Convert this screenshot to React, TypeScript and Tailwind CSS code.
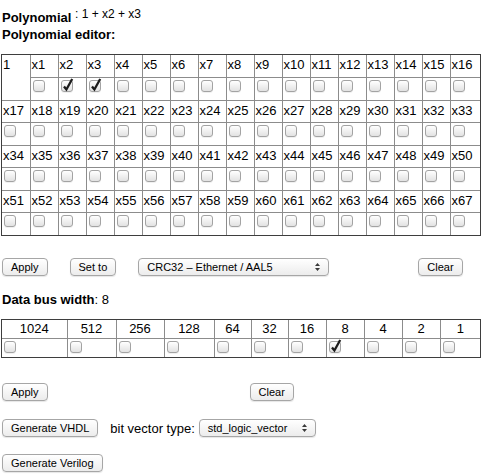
import React from 'react';

const CHECKED_POLY = ['x2', 'x3'];
const BUS_WIDTHS = [1024, 512, 256, 128, 64, 32, 16, 8, 4, 2, 1];
const BUS_COLS = ['w-[65px]', 'w-[49px]', 'w-[48px]', 'w-[50px]', 'w-[37px]', 'w-[37px]', 'w-[38px]', 'w-[38px]', 'w-[38px]', 'w-[38px]', ''];

// grupos de 17 coeficientes, o primeiro começa com o termo "1"
const groups = [
  Array.from({ length: 16 }, (_, i) => `x${i + 1}`),
  Array.from({ length: 17 }, (_, i) => `x${i + 17}`),
  Array.from({ length: 17 }, (_, i) => `x${i + 34}`),
  Array.from({ length: 17 }, (_, i) => `x${i + 51}`),
];

function Checkbox({ checked = false }: { checked?: boolean }) {
  return (
    <span className="relative inline-block w-[12px] h-[12px] rounded-[3px] border border-[#a3a3a3] bg-linear-to-b from-white to-[#e2e2e2] shadow-[0_1px_0_rgba(0,0,0,0.06)] align-top">
      {checked && (
        <svg width="14" height="16" viewBox="0 0 14 16" className="absolute -left-[1px] -top-[4px]">
          <path d="M3 9.5 L5.4 12.5 L11.2 2" stroke="#1c1c1c" strokeWidth="2.3" fill="none" />
        </svg>
      )}
    </span>
  );
}

function Button({ children, className = '' }: { children: React.ReactNode; className?: string }) {
  return (
    <button
      type="button"
      className={`h-[18px] px-[8px] rounded-[4px] border border-[#a6a6a6] bg-linear-to-b from-white to-[#ececec] text-[11px] leading-none text-black shadow-[0_1px_1px_rgba(0,0,0,0.1)] ${className}`}
    >
      {children}
    </button>
  );
}

function Select({ value, className = '' }: { value: string; className?: string }) {
  return (
    <div
      className={`flex items-center h-[18px] pl-[8px] pr-[8px] rounded-[4px] border border-[#a6a6a6] bg-linear-to-b from-white to-[#ececec] text-[11px] leading-none shadow-[0_1px_1px_rgba(0,0,0,0.1)] ${className}`}
    >
      <span className="flex-1">{value}</span>
      <svg width="5" height="8" viewBox="0 0 5 8">
        <path d="M0 3 L2.5 0 L5 3 Z M0 5 L2.5 8 L5 5 Z" fill="#3a3a3a" />
      </svg>
    </div>
  );
}

export default function App() {
  return (
    <div className="font-['Liberation_Sans',Arial,sans-serif] text-[13px] leading-[15px] text-black bg-white w-[485px] h-[476px] pt-[10px] overflow-hidden">
      <div className="pl-[2px] h-[17px]">
        <b>Polynomial</b> <span className="relative -top-[4px] text-[12px]">: 1 + x2 + x3</span>
      </div>
      <div className="pl-[2px] h-[15px] font-bold">Polynomial editor:</div>

      {/* editor do polinômio */}
      <div className="mt-[12px] ml-[1px] w-[480px] border border-[#3e3e3e]">
        <table className="w-full table-fixed border-collapse border-hidden">
          <colgroup>
            {Array.from({ length: 17 }, (_, i) => (
              <col key={i} className={i < 16 ? 'w-[28px]' : ''} />
            ))}
          </colgroup>
          <tbody>
            {groups.map((labels, g) => (
              <React.Fragment key={g}>
                <tr>
                  {g === 0 && (
                    <td rowSpan={2} className="border border-[#8c8c8c] align-top h-[22px] pl-[1px] pt-[2px]">
                      1
                    </td>
                  )}
                  {labels.map((l) => (
                    <td key={l} className="border border-[#8c8c8c] align-top h-[22px] pl-[1px] pt-[2px]">
                      {l}
                    </td>
                  ))}
                </tr>
                <tr>
                  {labels.map((l) => (
                    <td key={l} className="border border-[#8c8c8c] align-top h-[23px] pl-[2px] pt-[2px]">
                      <Checkbox checked={CHECKED_POLY.includes(l)} />
                    </td>
                  ))}
                </tr>
              </React.Fragment>
            ))}
          </tbody>
        </table>
      </div>

      <div className="flex items-center mt-[22px] pl-[2px]">
        <Button>Apply</Button>
        <Button className="ml-[22px]">Set to</Button>
        <Select value="CRC32 – Ethernet / AAL5" className="ml-[22px] w-[191px]" />
        <Button className="ml-[89px]">Clear</Button>
      </div>

      <div className="mt-[16px] pl-[2px] h-[15px]">
        <b>Data bus width</b>: 8
      </div>

      {/* largura do barramento */}
      <div className="mt-[12px] ml-[1px] w-[480px] border border-[#3e3e3e]">
        <table className="w-full table-fixed border-collapse border-hidden">
          <colgroup>
            {BUS_COLS.map((c, i) => (
              <col key={i} className={c} />
            ))}
          </colgroup>
          <tbody>
            <tr>
              {BUS_WIDTHS.map((w) => (
                <td key={w} className="border border-[#8c8c8c] text-center h-[18px] p-0">
                  {w}
                </td>
              ))}
            </tr>
            <tr>
              {BUS_WIDTHS.map((w) => (
                <td key={w} className="border border-[#8c8c8c] align-top h-[19px] pl-[2px] pt-[2px]">
                  <Checkbox checked={w === 8} />
                </td>
              ))}
            </tr>
          </tbody>
        </table>
      </div>

      <div className="flex items-center mt-[25px] pl-[2px]">
        <Button>Apply</Button>
        <Button className="ml-[202px]">Clear</Button>
      </div>

      <div className="flex items-center mt-[18px] pl-[2px]">
        <Button>Generate VHDL</Button>
        <span className="ml-[12px]">bit vector type:</span>
        <Select value="std_logic_vector" className="ml-[4px] w-[117px]" />
      </div>

      <div className="flex items-center mt-[17px] pl-[2px]">
        <Button>Generate Verilog</Button>
      </div>
    </div>
  );
}
